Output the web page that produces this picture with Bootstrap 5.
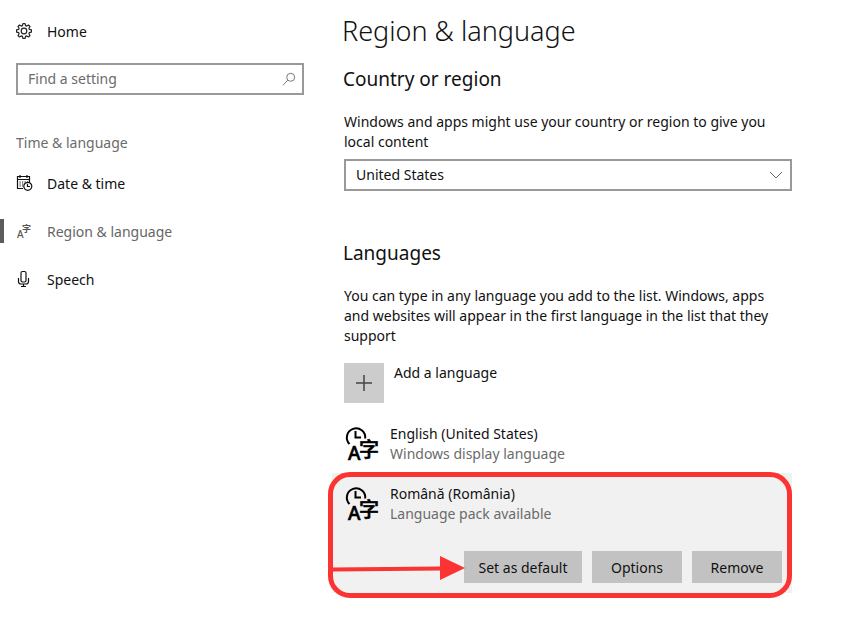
<!DOCTYPE html>
<html lang="en">
<head>
<meta charset="utf-8">
<meta name="viewport" content="width=device-width, initial-scale=1">
<title>Region &amp; language</title>
<link href="https://cdn.jsdelivr.net/npm/bootstrap@5.3.0/dist/css/bootstrap.min.css" rel="stylesheet">
<style>
  body { font-family: "Noto Sans", "Open Sans", sans-serif; font-size: 14px; line-height: 20px; color: #111; background: #fff; }
  .side { width: 320px; padding: 8px 16px 0; }
  .side-link { height: 48px; gap: 14px; color: #111; text-decoration: none; margin: 0 -16px; padding: 0 16px; }
  .side-link svg { width: 17px; height: 18px; flex: none; overflow: visible; }
  .side-link.current { color: #666; position: relative; }
  .side-link.current::before { content: ""; position: absolute; left: 0; top: 11px; width: 4px; height: 24px; background: #5c5c5c; }
  .soft { color: #6b6b6b; }
  .finder { border: 2px solid #999; height: 32px; margin: 7px 0 38px; padding: 0 6px 0 10px; }
  .finder input { border: 0; outline: 0; min-width: 0; padding: 0; background: none; color: #111; }
  .finder input::placeholder { color: #6b6b6b; opacity: 1; }
  .side h2 { font-size: 14px; line-height: 20px; font-weight: 400; margin: 0 0 7px; }
  .panel { max-width: 472px; padding: 13px 0 19px 24px; min-width: 0; }
  .panel h1 { font-size: 27px; line-height: 36px; font-weight: 300; margin: 0 0 16px -2px; }
  .panel h2 { font-size: 19px; line-height: 28px; font-weight: 400; margin: 0 0 19px -1px; }
  .panel p { margin: 0; padding-right: 16px; }
  .country { appearance: none; border: 2px solid #999; border-radius: 0; height: 32px; padding: 0 36px 0 10px; background: #fff; color: #111; }
  .country-wrap { position: relative; margin: 7px 0 48px; }
  .country-wrap svg { position: absolute; right: 9px; top: 12px; pointer-events: none; }
  .add-btn { margin: 17px 0 10px; gap: 10px; border: 0; padding: 0; background: none; color: #111; }
  .plus { width: 40px; height: 40px; background: #ccc; }
  .entry { margin-left: -12px; padding: 11px 10px 9px 14px; }
  .entry-head { gap: 10px; }
  .entry-head svg { overflow: visible; }
  .entry.chosen { background: #f1f1f1; padding-bottom: 10px; position: relative; }
  .actions { gap: 10px; margin-top: 27px; }
  .actions .btn { --bs-btn-bg: #c2c2c2; --bs-btn-color: #111; --bs-btn-hover-bg: #b4b4b4; border: 0; border-radius: 0; font-size: 14px; line-height: 20px; padding: 7px 0 5px; width: 90px; }
  .actions .btn.wide { width: 118px; }
  .ring { position: absolute; left: -4px; right: 0; top: -1px; bottom: -5px; border: 5px solid #fb3333; border-radius: 22px; pointer-events: none; }
  .arrow { position: absolute; left: 0; top: 82px; pointer-events: none; }
</style>
<script src="https://cdn.jsdelivr.net/npm/bootstrap@5.3.0/dist/js/bootstrap.bundle.min.js"></script>
</head>
<body>
<div class="d-flex">
  <aside class="side flex-shrink-0">
    <a href="#" class="side-link d-flex align-items-center">
      <svg viewBox="0 0 17 18" fill="none" stroke="#222" stroke-width="1.200" aria-hidden="true"><circle cx="8" cy="8" r="2.800"/><path stroke-linejoin="round" d="M6.900.6h2.200l.5 2 1.100.5 1.800-1.100 1.500 1.500-1.100 1.800.5 1.100 2 .5v2.200l-2 .5-.5 1.100 1.100 1.800-1.500 1.500-1.800-1.100-1.100.5-.5 2H6.900l-.5-2-1.100-.5L3.500 14 2 12.500l1.100-1.800-.5-1.100-2-.5V6.900l2-.5.5-1.100L2 3.500 3.500 2l1.800 1.100 1.100-.5z"/></svg>
      <span>Home</span>
    </a>
    <div class="finder d-flex align-items-center">
      <input type="text" class="flex-grow-1" placeholder="Find a setting" aria-label="Find a setting">
      <svg width="14" height="14" viewBox="0 0 14 14" fill="none" stroke="#777" aria-hidden="true"><circle cx="8.700" cy="5.300" r="4"/><path d="M5.900 8.200L1 13.200"/></svg>
    </div>
    <h2 class="soft">Time &amp; language</h2>
    <nav>
      <a href="#" class="side-link d-flex align-items-center">
        <svg viewBox="0 0 17 18" fill="none" stroke="#111" stroke-width="1.200" aria-hidden="true"><path d="M7 13.500H1.500v-12h12V7M1.500 4.500h12M4 0v3M11 0v3"/><path stroke-dasharray="1.200 1.300" d="M3.500 7H12M3.500 9H8M3.500 11H7"/><circle cx="11.800" cy="11.300" r="4"/><path d="M11.500 8.800v2.700H14"/></svg>
        <span>Date &amp; time</span>
      </a>
      <a href="#" class="side-link current d-flex align-items-center" aria-current="page">
        <svg viewBox="0 0 17 18" fill="#555" aria-hidden="true"><text x="1" y="15" font-family="Noto Sans, sans-serif" font-size="10" font-weight="500">A</text><text x="6" y="9" font-family="Noto Sans CJK SC, sans-serif" font-size="9" font-weight="700">字</text></svg>
        <span>Region &amp; language</span>
      </a>
      <a href="#" class="side-link d-flex align-items-center">
        <svg viewBox="0 0 17 18" fill="none" stroke="#111" stroke-width="1.200" aria-hidden="true"><rect x="5" y="0.500" width="5" height="10.500" rx="1.500"/><path d="M2.500 7v3.500q0 2.500 2.500 2.500h5q2.500 0 2.500-2.500V7M7.500 13v2.500M5 15.500h5"/></svg>
        <span>Speech</span>
      </a>
    </nav>
  </aside>
  <main class="panel flex-grow-1">
    <h1>Region &amp; language</h1>
    <section>
      <h2>Country or region</h2>
      <p><label for="country">Windows and apps might use your country or region to give you local content</label></p>
      <div class="country-wrap">
        <select id="country" class="country d-block w-100"><option>United States</option></select>
        <svg width="14" height="8" viewBox="0 0 14 8" fill="none" stroke="#666" aria-hidden="true"><path d="M1 1l6 6 6-6"/></svg>
      </div>
    </section>
    <section>
      <h2>Languages</h2>
      <p>You can type in any language you add to the list. Windows, apps and websites will appear in the first language in the list that they support</p>
      <button type="button" class="add-btn d-flex align-items-start">
        <span class="plus d-flex align-items-center justify-content-center"><svg width="16" height="16" viewBox="0 0 16 16" stroke="#444" stroke-width="1.500" aria-hidden="true"><path d="M8 0v16M0 8h16"/></svg></span>
        <span>Add a language</span>
      </button>
      <div class="entry">
        <div class="entry-head d-flex">
          <svg width="34" height="40" viewBox="0 0 34 40" class="flex-shrink-0" aria-hidden="true">
            <path d="M3.500 20A9.200 9.200 0 1 1 19.200 14.500M9.500 7V13.500H15" fill="none" stroke="#000" stroke-width="2"/>
            <text x="2" y="36" font-family="Noto Sans, sans-serif" font-size="19" font-weight="500" stroke="#000" stroke-width="0.600">A</text>
            <text x="13" y="33" font-family="Noto Sans CJK SC, sans-serif" font-size="20" font-weight="500" stroke="#000" stroke-width="0.600">字</text>
          </svg>
          <div><div>English (United States)</div><div class="soft">Windows display language</div></div>
        </div>
      </div>
      <div class="entry chosen">
        <div class="entry-head d-flex">
          <svg width="34" height="40" viewBox="0 0 34 40" class="flex-shrink-0" aria-hidden="true">
            <path d="M3.500 20A9.200 9.200 0 1 1 19.200 14.500M9.500 7V13.500H15" fill="none" stroke="#000" stroke-width="2"/>
            <text x="2" y="36" font-family="Noto Sans, sans-serif" font-size="19" font-weight="500" stroke="#000" stroke-width="0.600">A</text>
            <text x="13" y="33" font-family="Noto Sans CJK SC, sans-serif" font-size="20" font-weight="500" stroke="#000" stroke-width="0.600">字</text>
          </svg>
          <div><div>Română (România)</div><div class="soft">Language pack available</div></div>
        </div>
        <div class="actions d-flex justify-content-end">
          <button type="button" class="btn wide">Set as default</button>
          <button type="button" class="btn">Options</button>
          <button type="button" class="btn">Remove</button>
        </div>
        <div class="ring"></div>
        <svg class="arrow" width="133" height="26" viewBox="0 0 133 26" aria-hidden="true"><path d="M0 14.500L110 13.500" stroke="#fb3333" stroke-width="4"/><path d="M108 1L133 13 108 25z" fill="#fb3333"/></svg>
      </div>
    </section>
  </main>
</div>
</body>
</html>
